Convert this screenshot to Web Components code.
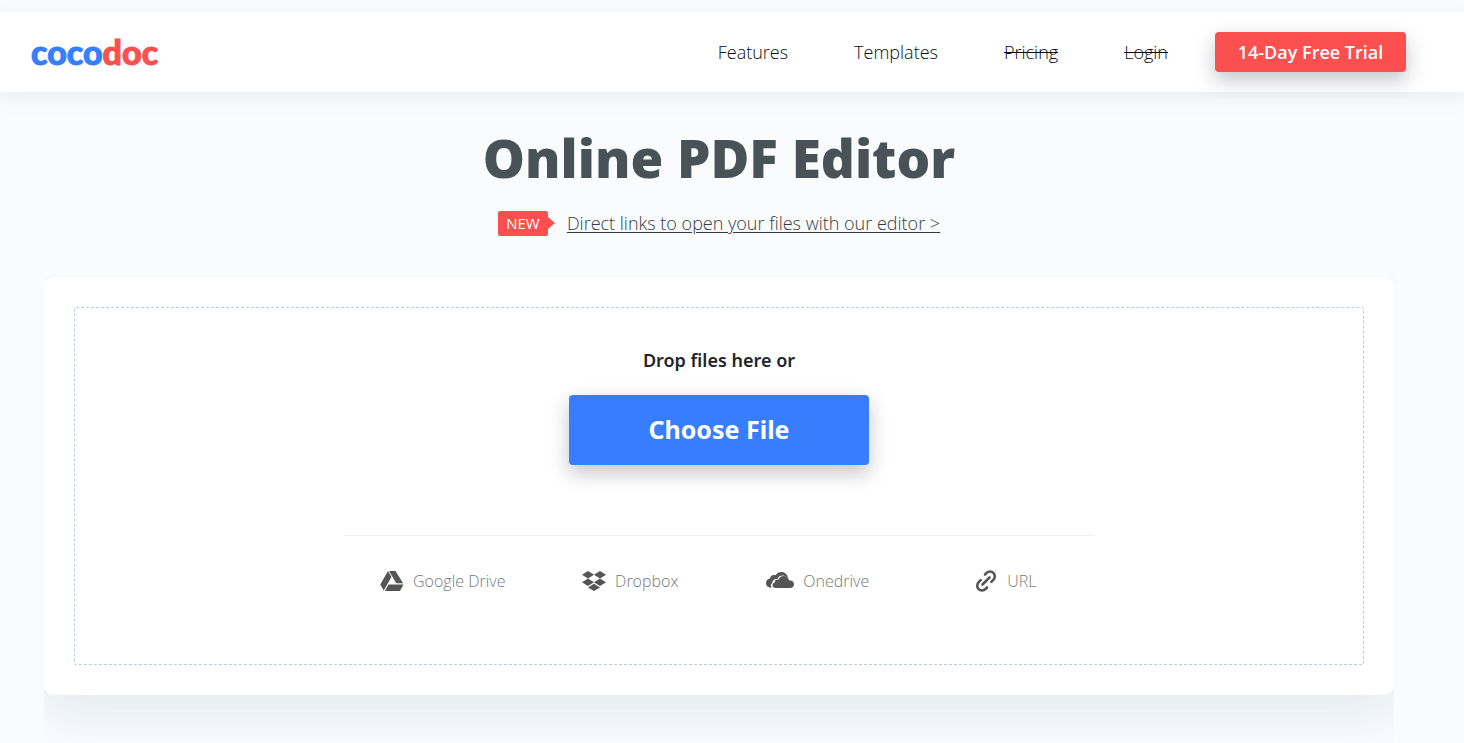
<!DOCTYPE html>
<html lang="en">
<head>
<meta charset="utf-8">
<meta name="viewport" content="width=device-width, initial-scale=1">
<title>Online PDF Editor</title>
<style>
  html, body { margin: 0; }
  body { background: #fafbfd; color: #212529; font-family: "Open Sans", "Noto Sans", sans-serif; }
</style>
</head>
<body>
<coco-page></coco-page>
<script>
const define = (name, html) => customElements.define(name, class extends HTMLElement {
  constructor() {
    super();
    const t = document.createElement('template');
    t.innerHTML = html;
    this.attachShadow({ mode: 'open' }).append(t.content.cloneNode(true));
  }
});

define('coco-logo', `
<style>
  :host { display: block; }
  a { display: block; font: 900 34px/40px Lato, sans-serif; color: #377dff; text-decoration: none; -webkit-text-stroke: 1px currentColor; }
  span { color: #fb4f50; }
</style>
<a href="#">coco<span>doc</span></a>`);

define('coco-header', `
<style>
  :host { display: block; position: relative; background: #fff; box-shadow: 0 6px 20px rgba(50, 60, 70, .08); }
  header { display: flex; align-items: center; justify-content: space-between; height: 80px; padding: 0 58px 0 31px; }
  nav { display: flex; align-items: center; gap: 66px; }
  nav a { font-size: 18px; font-weight: 300; line-height: 24px; color: #0c0f12; text-decoration: none; }
  nav a.off { text-decoration: line-through; }
  button { margin-left: -19px; width: 191px; height: 40px; padding: 0; border: 0; border-radius: 4px; background: #fb4f50; color: #fff;
    font: 600 18px/24px "Open Sans", sans-serif; box-shadow: 0 8px 20px rgba(20, 25, 45, .25); }
</style>
<header>
  <coco-logo></coco-logo>
  <nav>
    <a href="#">Features</a>
    <a href="#">Templates</a>
    <a href="#" class="off">Pricing</a>
    <a href="#" class="off">Login</a>
    <button type="button">14-Day Free Trial</button>
  </nav>
</header>`);

define('coco-hero', `
<style>
  :host { display: block; text-align: center; color: #495257; }
  h1 { margin: 0; font-weight: 800; font-size: 53px; line-height: 72px; }
  p { display: flex; justify-content: center; align-items: center; gap: 19px; margin: 16px 0 0; line-height: 26px; }
  .tag { position: relative; width: 50px; height: 25px; line-height: 25px; border-radius: 2px; background: #fb4f50; color: #fff; font-size: 15px; }
  .tag::after { content: ""; position: absolute; left: 100%; top: 6px; border: 6px solid transparent; border-left: 7px solid #fb4f50; border-right: 0; }
  a { color: #343c41; font-size: 18px; font-weight: 300; text-underline-offset: 2px; }
</style>
<h1>Online PDF Editor</h1>
<p><span class="tag">NEW</span><a href="#">Direct links to open your files with our editor &gt;</a></p>`);

define('coco-source', `
<style>
  :host { display: flex; justify-content: center; padding-left: 10px; }
  button { display: flex; align-items: center; gap: 9px; padding: 0; border: 0; background: none; color: #777;
    font: 300 16px/24px "Open Sans", sans-serif; }
  ::slotted(svg) { display: block; fill: #555; }
</style>
<button type="button"><slot name="icon"></slot><slot></slot></button>`);

define('coco-uploader', `
<style>
  :host { display: block; overflow: hidden; padding-bottom: 48px; background: linear-gradient(#fafbfd 60%, #f9fcff 90%); }
  .card { padding: 30px; border-radius: 10px; background: #fff; box-shadow: 0 22px 50px rgba(90, 115, 160, .13); }
  .drop { box-sizing: border-box; min-height: 358px; padding: 40px 0 48px; border: 1px dashed #b5cde9; border-radius: 2px; display: flex; flex-direction: column; align-items: center; }
  h2 { margin: 0; font: 600 18px/24px "Noto Sans", sans-serif; }
  .choose { width: 300px; height: 70px; margin-top: 23px; padding: 0 0 2px; border: 0; border-radius: 4px; background: #377dff; color: #fff;
    font: 700 25px/36px "Noto Sans", sans-serif; box-shadow: 0 8px 20px rgba(20, 25, 45, .25); }
  .sources { box-sizing: border-box; display: grid; grid-template-columns: repeat(4, 1fr); align-items: center; width: 100%; max-width: 750px; margin-top: 70px; padding-top: 33px; border-top: 1px solid #f0f1f3; }
</style>
<div class="card"><section class="drop">
  <h2>Drop files here or</h2>
  <button class="choose" type="button">Choose File</button>
  <div class="sources">
    <coco-source>
      <svg slot="icon" width="24" height="22" viewBox="0 0 24 22" aria-hidden="true"><path d="M8 1 11.500 7 3.700 20.500 .3 14.500ZM9 1h6.500l7.600 12.300h-6.800ZM8.500 14.500h15L20 21H4.900Z"/></svg>
      Google Drive
    </coco-source>
    <coco-source>
      <svg slot="icon" width="24" height="22" viewBox="0 0 24 22" aria-hidden="true"><path d="M6 1l6 3.700-6 3.700-6-3.700ZM18 1l6 3.700-6 3.700-6-3.700ZM6 8.500l6 3.700-6 3.700-6-3.700ZM18 8.500l6 3.700-6 3.700-6-3.700ZM12 13.800l6 3.600-6 3.600-6-3.600Z"/></svg>
      Dropbox
    </coco-source>
    <coco-source>
      <svg slot="icon" width="28" height="22" viewBox="0 0 28 22" aria-hidden="true"><path d="M5.800 17.800H5C2 17.500 0 15.800 0 13.200c0-2.500 1.700-4.300 4-4.700C4.300 5.500 6.600 4.300 9.700 5.200 11 3.200 13 2 15.300 2c3.300 0 5.800 2 6.600 5l-1.400.1C18 4.600 13.200 5 11.300 8.900 7.700 9 6.300 10.800 6.200 13c-1.600 1.300-1.700 3.300-.4 4.800Z"/><path d="M10 18c-2.100 0-3.500-1-3.500-2.700 0-1.500 1-2.500 2.400-2.700-.3-2.200 1.300-3.500 3.600-3C14 6.700 16 5.800 18.200 6c2.500.2 4.400 2 4.800 4.300 2.800.1 5 1.500 5 3.900 0 2.300-1.500 3.800-4 3.800Z"/></svg>
      Onedrive
    </coco-source>
    <coco-source>
      <svg slot="icon" width="24" height="22" viewBox="0 0 24 22" aria-hidden="true"><g style="fill:none;stroke:#555;stroke-width:2.600;stroke-linecap:round"><path d="m8.500 14.500 7-7M11 4.500l1.200-1.300c2.200-2.100 5.300-2.100 7.200-.3s1.900 4.900-.1 7l-2 2M13 17.500l-1.200 1.300c-2.200 2.100-5.300 2.100-7.200.3s-1.900-4.900.1-7l2-2"/></g></svg>
      URL
    </coco-source>
  </div>
</section></div>`);

define('coco-page', `
<style>
  :host { display: block; padding-top: 12px; }
  main { padding: 30px 70px 0 44px; }
  coco-uploader { margin-top: 41px; }
</style>
<coco-header></coco-header>
<main>
  <coco-hero></coco-hero>
  <coco-uploader></coco-uploader>
</main>`);
</script>
</body>
</html>
